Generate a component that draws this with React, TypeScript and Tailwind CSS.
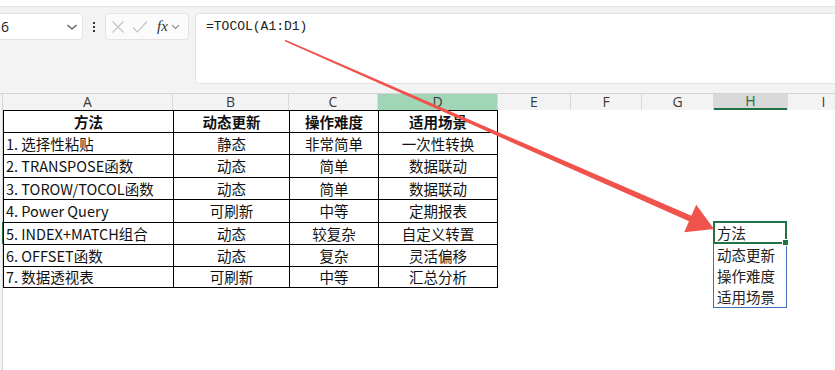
import React from 'react';

const cjk = { fontFamily: '"Noto Sans CJK SC", "Noto Sans", sans-serif' };

const rows: string[][] = [
  ['方法', '动态更新', '操作难度', '适用场景'],
  ['1. 选择性粘贴', '静态', '非常简单', '一次性转换'],
  ['2. TRANSPOSE函数', '动态', '简单', '数据联动'],
  ['3. TOROW/TOCOL函数', '动态', '简单', '数据联动'],
  ['4. Power Query', '可刷新', '中等', '定期报表'],
  ['5. INDEX+MATCH组合', '动态', '较复杂', '自定义转置'],
  ['6. OFFSET函数', '动态', '复杂', '灵活偏移'],
  ['7. 数据透视表', '可刷新', '中等', '汇总分析'],
];

const spill = ['动态更新', '操作难度', '适用场景'];

const ColHeaders = () => (
  <div className="flex h-[17px] border-t border-[#d4d4d4] bg-[#f3f3f3] text-[14px] leading-[16px] text-[#3a3a3a]" style={{ fontFamily: '"Open Sans", "Noto Sans", sans-serif' }}>
    <div className="w-[3px] shrink-0 border-r border-[#d4d4d4]" />
    <div className="flex w-[170px] shrink-0 items-center justify-center border-r border-[#d9d9d9]">A</div>
    <div className="flex w-[116px] shrink-0 items-center justify-center border-r border-[#d9d9d9]">B</div>
    <div className="flex w-[89px] shrink-0 items-center justify-center border-r border-[#d9d9d9]">C</div>
    <div className="flex w-[120px] shrink-0 items-center justify-center bg-[#a0d6b6] border-r border-[#d9d9d9]">D</div>
    <div className="flex w-[73px] shrink-0 items-center justify-center border-r border-[#d9d9d9]">E</div>
    <div className="flex w-[71px] shrink-0 items-center justify-center border-r border-[#d9d9d9]">F</div>
    <div className="flex w-[72px] shrink-0 items-center justify-center border-r border-[#d9d9d9]">G</div>
    <div className="flex w-[73px] shrink-0 items-center justify-center bg-[#d9d9d9] border-b-2 border-[#217346] text-[#1e6b41]">H</div>
    <div className="flex w-[72px] shrink-0 items-center justify-center border-l border-[#d9d9d9]">I</div>
  </div>
);

export default function App() {
  return (
    <div className="relative h-[370px] w-[835px] overflow-hidden bg-white" style={cjk}>
      {/* formula bar */}
      <div className="h-[6px] bg-white" />
      <div className="h-[87px] border-t border-[#e2e2e2] bg-[#f3f3f3] pt-[6px]">
        <div className="flex items-start">
          <div className="-ml-[14px] flex h-[27px] w-[97px] items-center justify-between rounded-[4px] border border-[#e3e3e3] bg-white pl-[14px] pr-[4px] text-[14px] text-[#222]" style={{ fontFamily: '"Open Sans", sans-serif' }}>
            <span>6</span>
            <svg width="12" height="8" viewBox="0 0 12 8" fill="none" stroke="#555" strokeWidth="1.3">
              <path d="M1.5 2 L6 6 L10.5 2" />
            </svg>
          </div>
          <div className="flex h-[27px] w-[22px] flex-col items-center justify-center gap-[2px]">
            <span className="h-[2px] w-[2px] bg-[#333]" />
            <span className="h-[2px] w-[2px] bg-[#333]" />
            <span className="h-[2px] w-[2px] bg-[#333]" />
          </div>
          <div className="flex h-[27px] w-[84px] items-center rounded-[4px] border border-[#e3e3e3] bg-[#fbfbfb] pl-[5px]">
            <svg width="14" height="14" viewBox="0 0 14 14" fill="none" stroke="#c4c4c4" strokeWidth="1.2">
              <path d="M1.5 1.5 L12.5 12.5 M12.5 1.5 L1.5 12.5" />
            </svg>
            <svg className="ml-[7px]" width="16" height="14" viewBox="0 0 16 14" fill="none" stroke="#c4c4c4" strokeWidth="1.2">
              <path d="M1 7.5 L5.5 12 L15 1.5" />
            </svg>
            <span className="ml-[9px] text-[15px] italic text-[#333]" style={{ fontFamily: '"Liberation Serif", serif' }}>fx</span>
            <svg className="ml-[3px]" width="9" height="6" viewBox="0 0 9 6" fill="none" stroke="#888" strokeWidth="1.1">
              <path d="M1 1.2 L4.5 4.5 L8 1.2" />
            </svg>
          </div>
          <div className="ml-[6px] h-[71px] flex-1 rounded-l-[5px] border border-r-0 border-[#e3e3e3] bg-white pl-[10px] pt-[3px] text-[13px] leading-[20px] text-[#222]" style={{ fontFamily: '"Liberation Mono", monospace' }}>
            =TOCOL(A1:D1)
          </div>
        </div>
      </div>

      <ColHeaders />

      {/* sheet */}
      <div className="grid grid-cols-[3px_170px_116px_89px_120px_73px_71px_72px_73px_1fr] grid-rows-[22px_22px_23px_22px_23px_22px_22px_22px_22px_22px_22px_22px_22px] text-[14.5px] leading-[20px] text-[#111]">
        {Array.from({ length: 13 }).map((_, i) => (
          <div
            key={'rh' + i}
            className={
              'col-start-1 bg-[#f3f3f3] border-r ' + (i === 5 ? 'border-[#217346]' : 'border-[#d4d4d4]')
            }
            style={{ gridRowStart: i + 1 }}
          />
        ))}
        {rows.map((r, i) =>
          r.map((c, j) => (
            <div
              key={i + '-' + j}
              className={
                'flex items-center border-l border-t border-black whitespace-nowrap ' +
                (j === 0 && i > 0 ? 'justify-start pl-[2px] ' : 'justify-center ') +
                (j === 3 ? 'border-r ' : '') +
                (i === rows.length - 1 ? 'border-b ' : '') +
                (i === 0 ? 'font-bold' : '')
              }
              style={{ gridRowStart: i + 1, gridColumnStart: j + 2 }}
            >
              {c}
            </div>
          ))
        )}
        <div className="col-start-9 row-start-6 row-span-4 -ml-[1px] -mt-[1px] flex h-[86px] w-[74px] flex-col self-start">
          <div className="relative h-[23px] border-2 border-[#217346] pl-[2px] leading-[19px] text-[#222]">
            方法
            <span className="absolute -bottom-[3px] -right-[3px] h-[5px] w-[5px] bg-[#217346] outline outline-1 outline-white" />
          </div>
          <div className="flex flex-1 flex-col border border-t-0 border-[#3e70b8] pl-[3px] text-[#222]">
            {spill.map(s => (
              <div key={s} className="flex h-[21px] items-center">{s}</div>
            ))}
          </div>
        </div>
      </div>

      {/* arrow */}
      <svg className="pointer-events-none absolute left-0 top-0" width="835" height="370" viewBox="0 0 835 370">
        <polygon
          points="284.7,41.2 689,221.25 684.2,232.2 714,229 696.2,204.8 691.4,215.75 285.3,39.8"
          fill="#f0524c"
        />
      </svg>
    </div>
  );
}
